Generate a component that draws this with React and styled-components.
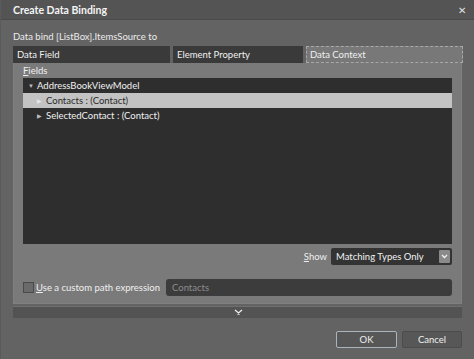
import React from 'react';
import styled, { createGlobalStyle } from 'styled-components';

const Global = createGlobalStyle`
  html, body {
    margin: 0;
    padding: 0;
    background: #606060;
  }
  * {
    box-sizing: border-box;
  }
`;

const Dialog = styled.div`
  width: 474px;
  height: 359px;
  background: #636363;
  font-family: Lato, 'Open Sans', sans-serif;
  font-size: 9.5px;
  color: #f0f0f0;
  white-space: nowrap;
  display: flex;
  flex-direction: column;
  border-left: 1px solid #5a5a5a;
`;

const TitleBar = styled.div`
  height: 20px;
  background: #545454;
  border-bottom: 1px solid #4a4a4a;
  display: flex;
  align-items: center;
  justify-content: space-between;
  padding: 0 8px 0 12px;
`;

const Title = styled.div`
  font-weight: 700;
  font-size: 10.5px;
  color: #f4f4f4;
`;

const Close = styled.div`
  font-size: 10px;
  color: #e0e0e0;
  line-height: 1;
`;

const Body = styled.div`
  flex: 1;
  display: flex;
  flex-direction: column;
  padding: 8px 12px 0 12px;
`;

const Caption = styled.div`
  height: 18px;
  line-height: 18px;
  color: #ececec;
`;

const Tabs = styled.div`
  display: flex;
  gap: 3px;
  height: 17px;
`;

const Tab = styled.div`
  flex: ${({ $w }) => `0 0 ${$w}px`};
  background: ${({ $active }) => ($active ? '#787878' : '#3a3a3a')};
  border: ${({ $active }) => ($active ? '1px dashed #a8a8a8' : '1px solid #3a3a3a')};
  padding-left: 3px;
  line-height: 15px;
  color: #f0f0f0;
`;

const Panel = styled.div`
  height: 241px;
  background: #7a7a7a;
  border: 1px solid #808080;
  border-top: none;
  display: flex;
  flex-direction: column;
  padding: 2px 9px 0 9px;
`;

const FieldsLabel = styled.div`
  height: 13px;
  line-height: 12px;
  color: #f0f0f0;
`;

const Tree = styled.div`
  height: 166px;
  background: #2e2e2e;
  display: flex;
  flex-direction: column;
`;

const Row = styled.div`
  height: 15px;
  display: flex;
  align-items: center;
  padding-left: ${({ $depth }) => 5 + $depth * 9}px;
  background: ${({ $selected }) => ($selected ? '#c3c3c3' : 'transparent')};
  color: ${({ $selected }) => ($selected ? '#2a2a2a' : '#f0f0f0')};
  border-bottom: 1px solid ${({ $selected }) => ($selected ? '#c3c3c3' : '#2e2e2e')};
`;

const Arrow = styled.span`
  font-size: 6px;
  width: 9px;
  color: ${({ $selected }) => ($selected ? '#e6e6e6' : '#bdbdbd')};
`;

const ShowRow = styled.div`
  display: flex;
  justify-content: flex-end;
  align-items: center;
  gap: 4px;
  margin-top: 4px;
  height: 17px;
`;

const Select = styled.div`
  width: 121px;
  height: 17px;
  background: #333;
  border-radius: 2px;
  display: flex;
  align-items: center;
  justify-content: space-between;
  padding: 0 2px 0 5px;
  color: #f0f0f0;
`;

const SelectBtn = styled.div`
  width: 11px;
  height: 13px;
  background: #8a8a8a;
  border-radius: 1px;
  display: flex;
  align-items: center;
  justify-content: center;
`;

const PathRow = styled.div`
  display: flex;
  align-items: center;
  margin-top: 14px;
  height: 17px;
`;

const Check = styled.div`
  width: 11px;
  height: 11px;
  border: 1px solid #4a4a4a;
  background: #6a6a6a;
  margin-right: 2px;
`;

const PathLabel = styled.div`
  width: 130px;
  color: #f0f0f0;
`;

const PathInput = styled.div`
  flex: 1;
  height: 17px;
  background: #3c3c3c;
  border-radius: 3px;
  padding-left: 6px;
  line-height: 17px;
  color: #8c8c8c;
`;

const Expander = styled.div`
  margin-top: 2px;
  height: 12px;
  background: #535353;
  border-top: 1px solid #6e6e6e;
  display: flex;
  justify-content: center;
  align-items: center;
  padding-left: 2px;
`;

const Footer = styled.div`
  display: flex;
  justify-content: flex-end;
  gap: 5px;
  margin-top: 13px;
`;

const Button = styled.div`
  width: ${({ $primary }) => ($primary ? 61 : 60)}px;
  height: 17px;
  background: #575757;
  border: 1px solid ${({ $primary }) => ($primary ? '#a9b4bd' : '#4c4c4c')};
  border-radius: 2px;
  display: flex;
  align-items: center;
  justify-content: center;
  color: #f0f0f0;
`;

export default function App() {
  return (
    <>
      <Global />
      <Dialog>
        <TitleBar>
          <Title>Create Data Binding</Title>
          <Close>✕</Close>
        </TitleBar>
        <Body>
          <Caption>Data bind [ListBox].ItemsSource to</Caption>
          <Tabs>
            <Tab $w={157}>Data Field</Tab>
            <Tab $w={130}>Element Property</Tab>
            <Tab $w={157} $active>Data Context</Tab>
          </Tabs>
          <Panel>
            <FieldsLabel><u>F</u>ields</FieldsLabel>
            <Tree>
              <Row $depth={0}><Arrow>▼</Arrow>AddressBookViewModel</Row>
              <Row $depth={1} $selected><Arrow $selected>▶</Arrow>Contacts : (Contact)</Row>
              <Row $depth={1}><Arrow>▶</Arrow>SelectedContact : (Contact)</Row>
            </Tree>
            <ShowRow>
              <span><u>S</u>how</span>
              <Select>
                Matching Types Only
                <SelectBtn>
                  <svg width="7" height="5" viewBox="0 0 7 5">
                    <path d="M1 1 L3.5 3.5 L6 1" stroke="#f0f0f0" strokeWidth="1.3" fill="none" />
                  </svg>
                </SelectBtn>
              </Select>
            </ShowRow>
            <PathRow>
              <Check />
              <PathLabel><u>U</u>se a custom path expression</PathLabel>
              <PathInput>Contacts</PathInput>
            </PathRow>
          </Panel>
          <Expander>
            <svg width="9" height="7" viewBox="0 0 9 7">
              <path d="M1 1 L4.5 4 L8 1" stroke="#f0f0f0" strokeWidth="1.3" fill="none" />
              <path d="M3.5 5 L4.5 6 L5.5 5" stroke="#f0f0f0" strokeWidth="1" fill="none" />
            </svg>
          </Expander>
          <Footer>
            <Button $primary>OK</Button>
            <Button>Cancel</Button>
          </Footer>
        </Body>
      </Dialog>
    </>
  );
}
